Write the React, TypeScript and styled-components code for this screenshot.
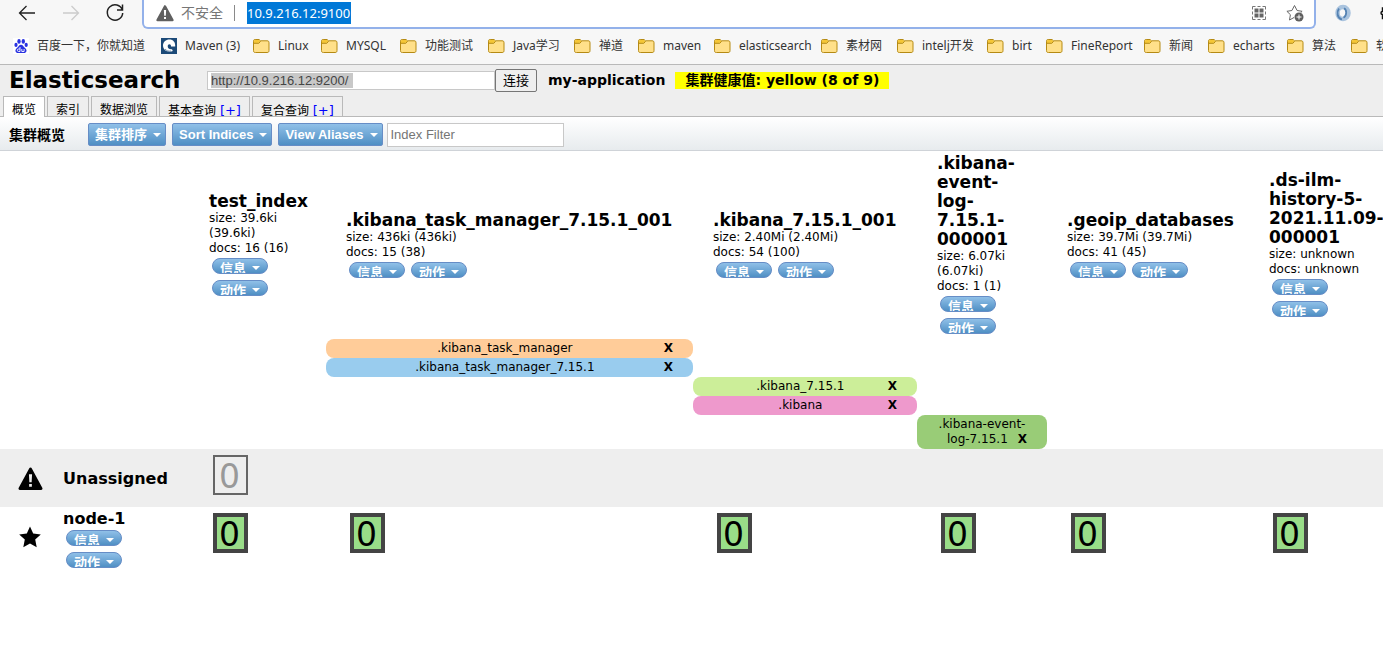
import React from "react";
import styled, { createGlobalStyle, css } from "styled-components";

const verdana = `Verdana, "DejaVu Sans", "Noto Sans CJK SC", sans-serif`;
const arial = `"Liberation Sans", Arial, "Noto Sans CJK SC", sans-serif`;
const chrome = `"Noto Sans", "Noto Sans CJK SC", sans-serif`;

const GlobalStyle = createGlobalStyle`
  *, *::before, *::after { box-sizing: border-box; }
  body { margin: 0; background: #fff; color: #000; font: 12px/15px ${verdana}; overflow-x: hidden; }
  h1, h2, h3 { margin: 0; }
  button, input { font: inherit; color: inherit; margin: 0; }
  a { color: inherit; text-decoration: none; }
`;

/* ---------- browser frame ---------- */

const BrowserBar = styled.div`
  background: #f7f7f7;
  font-family: ${chrome};
  border-bottom: 1px solid #b9b9b9;
`;

const AddressRow = styled.div`
  display: flex;
  height: 29px;
  overflow: hidden;
`;

const NavButtons = styled.div`
  display: flex;
  width: 142px;
  flex: none;
  gap: 20px;
  padding-left: 15px;
`;

const IconButton = styled.button`
  display: flex;
  align-items: center;
  justify-content: center;
  flex: none;
  width: 24px;
  height: 26px;
  padding: 0;
  border: 0;
  background: none;
`;

const AddressBox = styled.div`
  display: flex;
  align-items: center;
  flex: 1;
  height: 29px;
  padding: 0 7px 1px 12px;
  background: #fff;
  border: 2px solid #93b1ea;
  border-top: 0;
  border-radius: 0 0 6px 6px;
`;

const Insecure = styled.span`
  margin: 0 12px 0 7px;
  padding-right: 11px;
  border-right: 1px solid #8a8a8a;
  font-size: 14px;
  line-height: 16px;
  color: #767676;
`;

const AddressInput = styled.input`
  width: 104px;
  height: 22px;
  padding: 0;
  border: 0;
  outline: 0;
  background: #0078d7;
  color: #fff;
  font-size: 13px;
`;

const AddressTools = styled.div`
  display: flex;
  gap: 12px;
  margin-left: auto;
`;

const Extensions = styled.div`
  display: flex;
  gap: 20px;
  width: 67px;
  padding-left: 15px;
  flex: none;
  overflow: hidden;
`;

const Bookmarks = styled.nav`
  display: flex;
  height: 35px;
  padding: 0 0 1px 13px;
  overflow: hidden;
`;

const Bookmark = styled.a<{ $width: number }>`
  display: flex;
  align-items: center;
  flex: none;
  gap: 8px;
  width: ${(p) => p.$width}px;
  font-size: 12px;
  line-height: 16px;
  color: #333;
  white-space: nowrap;
  svg { flex: none; }
`;

/* ---------- application header ---------- */

const Header = styled.header`
  display: flex;
  flex-direction: column;
  height: 52px;
  background: #eee;
  border-bottom: 1px solid #b9b9b9;
`;

const HeaderRow = styled.div`
  display: flex;
  align-items: center;
  height: 30px;
  padding-left: 9px;
`;

const Title = styled.h1`
  width: 198px;
  font-size: 23px;
  line-height: 30px;
`;

const UrlBox = styled.label`
  display: flex;
  align-items: center;
  width: 288px;
  height: 19px;
  padding-left: 3px;
  background: #fff;
  border: 1px solid #c8c8c8;
`;

const UrlInput = styled.input`
  width: 142px;
  height: 15px;
  padding: 0;
  border: 0;
  outline: 0;
  background: #c8c8c8;
  color: #444;
  font: 13px/15px ${arial};
`;

const Connect = styled.button`
  width: 42px;
  height: 23px;
  padding: 0;
  border: 1px solid #767676;
  border-radius: 2px;
  background: #efefef;
  font: 13px/19px ${arial};
`;

const ClusterName = styled.span`
  margin-left: 11px;
  font-weight: bold;
  font-size: 14px;
`;

const Health = styled.span`
  margin-left: 10px;
  padding: 0 10px;
  background: #ff0;
  font-weight: bold;
  font-size: 14px;
  line-height: 17px;
  white-space: nowrap;
`;

const Tabs = styled.nav`
  display: flex;
  align-items: flex-end;
  gap: 2px;
  height: 21px;
  padding-left: 3px;
`;

const Tab = styled.a<{ $active?: boolean }>`
  height: 20px;
  padding: 5px 8px 0;
  border: 1px solid #b9b9b9;
  border-bottom: 0;
  background: ${(p) => (p.$active ? "#fff" : "#eee")};
  ${(p) => p.$active && css`margin-bottom: -1px; height: 21px;`}
  line-height: 17px;
  white-space: nowrap;
  span { color: #00f; font-size: 13px; }
`;

const Toolbar = styled.div`
  display: flex;
  align-items: center;
  height: 34px;
  padding: 2px 0 0 9px;
  background: linear-gradient(#fff, #e7ebee);
  border-bottom: 1px solid #cfd3d8;
`;

const ToolbarLabel = styled.h2`
  width: 79px;
  font-size: 14px;
  line-height: 20px;
`;

const blue = css`
  display: inline-flex;
  border: 1px solid #668dc6;
  background: linear-gradient(#90c0e8, #4f8fc4);
  color: #fff;
  font-family: ${arial};
  font-weight: bold;
  font-size: 13px;
  white-space: nowrap;
`;

const MenuButton = styled.button`
  ${blue}
  align-items: center;
  gap: 6px;
  height: 23px;
  padding: 0 4px 0 6px;
  margin-right: 6px;
  border-radius: 2px;
`;

const Caret = styled.i`
  flex: none;
  border: 4px solid transparent;
  border-top-color: #fff;
  border-bottom: 0;
`;

const Filter = styled.input`
  width: 177px;
  height: 24px;
  margin-left: -2px;
  padding: 0 3px;
  border: 1px solid #c8c8c8;
  background: #fff;
  font: 13px/20px ${arial};
  &::placeholder { color: #757575; }
`;

/* ---------- cluster table ---------- */

const Scroller = styled.main`
  overflow-x: hidden;
`;

const Cluster = styled.table`
  width: 100%;
  min-width: 1380px;
  table-layout: fixed;
  border-collapse: collapse;
  th, td { padding: 0; text-align: left; font-weight: normal; }
`;

const Col = styled.col<{ $width?: number }>`
  width: ${(p) => (p.$width ? `${p.$width}px` : "auto")};
`;

const IndexHead = styled.div<{ $narrow?: boolean }>`
  padding: 3px 0 0 20px;
  ${(p) => p.$narrow && css`padding-right: 18px;`}
`;

const Name = styled.h3<{ $index?: boolean }>`
  font-size: ${(p) => (p.$index ? 17 : 16)}px;
  line-height: 19px;
`;

const Pills = styled.div<{ $stack?: boolean }>`
  display: flex;
  flex-direction: ${(p) => (p.$stack ? "column" : "row")};
  gap: 6px;
  padding: 2px 3px 5px;
`;

const Pill = styled.button`
  ${blue}
  align-items: flex-start;
  gap: 6px;
  width: 56px;
  height: 16px;
  padding: 0 6px 0 7px;
  border-radius: 8px;
  line-height: 20px;
  overflow: hidden;
  ${Caret} { margin-top: 7px; }
`;

const Alias = styled.div<{ $color: string }>`
  padding: 2px 20px;
  border-radius: 8px;
  background: ${(p) => p.$color};
  text-align: center;
`;

const Remove = styled.button`
  float: right;
  padding: 0;
  border: 0;
  background: none;
  font-weight: bold;
  line-height: 15px;
`;

const NodeRow = styled.tr<{ $shaded?: boolean }>`
  height: ${(p) => (p.$shaded ? 58 : 68)}px;
  background: ${(p) => (p.$shaded ? "#eee" : "#fff")};
`;

const NodeIcon = styled.td<{ $raised?: boolean }>`
  && {
    padding-left: 18px;
    padding-bottom: ${(p) => (p.$raised ? 8 : 0)}px;
  }
  svg { display: block; }
`;

const ShardCell = styled.td`
  && { padding: 6px 0 0 24px; }
  vertical-align: top;
`;

const Shard = styled.button<{ $unassigned?: boolean }>`
  display: flex;
  align-items: center;
  justify-content: center;
  width: 35px;
  height: 40px;
  padding: 3px 2px 0 0;
  border: ${(p) => (p.$unassigned ? "2px solid #666" : "4px solid #444")};
  background: ${(p) => (p.$unassigned ? "#eee" : "#9d8")};
  color: ${(p) => (p.$unassigned ? "#999" : "#000")};
  font-size: 33px;
  line-height: 29px;
`;

/* ---------- drawings ---------- */

const Folder = () => (
  <svg width="18" height="16" viewBox="0 0 18 16">
    <path d="M1.500 3.200c0-1.300.5-1.700 1.700-1.700h3.800l1.500 1.300h6.500c1.500 0 2 .6 2 2v7.700c0 1.500-.6 2-2 2h-11.500c-1.500 0-2-.5-2-2z" fill="#ffe08a" stroke="#b58a13" />
    <path d="M2 5.200V3.300C2 2.300 2.400 2 3.200 2h3.600L8.300 3.200 6.800 4.800z" fill="#f5c636" />
    <path d="M2 5.300h4.800L8.600 3.200" fill="none" stroke="#b58a13" />
  </svg>
);

const Paw = () => (
  <svg width="16" height="16" viewBox="0 0 16 16">
    <rect width="16" height="16" fill="#fff" />
    <g fill="#2932e1">
      <ellipse cx="6" cy="3.400" rx="1.700" ry="2.300" />
      <ellipse cx="10.300" cy="3.400" rx="1.700" ry="2.300" />
      <ellipse cx="3" cy="6.900" rx="1.600" ry="2.100" />
      <ellipse cx="13.200" cy="6.900" rx="1.600" ry="2.100" />
      <path d="M8 6.800c2 0 2.500 2 4 3.200 2.700 2.200 1.500 5-1 5-1.500 0-4.500 0-6 0-2.500 0-3.700-2.800-1-5C5.500 8.800 6 6.800 8 6.800z" />
    </g>
    <path d="M7 9v4.500H5.600a1.200 1.200 0 010-2.500H7M8.800 11v2.500h2.300V11" fill="none" stroke="#fff" strokeWidth=".9" />
  </svg>
);

const Swirl = () => (
  <svg width="17" height="16" viewBox="0 0 17 16">
    <rect x="1" width="16" height="16" fill="#1c4a78" />
    <path d="M9.500 1.600c3.700 0 5.900 2.700 5.700 6.900H11c.1-1.400-.5-2.200-1.600-2.200-1 0-1.700.8-1.700 2 0 2 1.700 3.300 4.300 2.900l.8 1.800c-1 .5-2 .8-3.200.8-3.700 0-6.600-2.600-6.600-6.200 0-3.400 2.800-6 6.500-6z" fill="#fff" />
    <path d="M5 11c1.500 1.800 3.500 2.500 6 2" fill="none" stroke="#1c4a78" strokeWidth=".6" />
  </svg>
);

const Warning = ({ size, fill, mark }: { size: number; fill: string; mark: string }) => (
  <svg width={size} height={size} viewBox="0 0 24 24">
    <path d="M12 1.500c.6 0 1 .3 1.300.8l10 18.500c.6 1.100 0 2.200-1.200 2.200H1.900C.7 23 .1 21.900.7 20.800l10-18.500c.3-.5.7-.8 1.300-.8z" fill={fill} />
    <path d="M10.500 8h3l-.4 7.500h-2.200zM10.700 17.300h2.600V20h-2.600z" fill={mark} />
  </svg>
);

/* ---------- data ---------- */

const bookmarks: [string, number][] = [
  ["百度一下，你就知道", 147], ["Maven (3)", 92], ["Linux", 68], ["MYSQL", 79], ["功能测试", 88],
  ["Java学习", 86], ["禅道", 64], ["maven", 76], ["elasticsearch", 107], ["素材网", 76],
  ["intelj开发", 90], ["birt", 59], ["FineReport", 98], ["新闻", 64], ["echarts", 79],
  ["算法", 64], ["软件", 64],
];

type IndexInfo = { name: string; size: string; docs: string; width?: number; narrow?: boolean };

const indices: IndexInfo[] = [
  { name: "test_index", size: "39.6ki (39.6ki)", docs: "16 (16)", width: 137, narrow: true },
  { name: ".kibana_task_manager_7.15.1_001", size: "436ki (436ki)", docs: "15 (38)", width: 367 },
  { name: ".kibana_7.15.1_001", size: "2.40Mi (2.40Mi)", docs: "54 (100)", width: 224 },
  { name: ".kibana-event-log-7.15.1-000001", size: "6.07ki (6.07ki)", docs: "1 (1)", width: 130, narrow: true },
  { name: ".geoip_databases", size: "39.7Mi (39.7Mi)", docs: "41 (45)", width: 202 },
  { name: ".ds-ilm-history-5-2021.11.09-000001", size: "unknown", docs: "unknown" },
];

const aliases = [
  { name: ".kibana_task_manager", column: 1, color: "#fc9" },
  { name: ".kibana_task_manager_7.15.1", column: 1, color: "#9ce" },
  { name: ".kibana_7.15.1", column: 2, color: "#ce9" },
  { name: ".kibana", column: 2, color: "#e9c" },
  { name: ".kibana-event-log-7.15.1", column: 3, color: "#9c7" },
];

const Actions = ({ stack }: { stack?: boolean }) => (
  <Pills $stack={stack}>
    <Pill type="button">信息<Caret /></Pill>
    <Pill type="button">动作<Caret /></Pill>
  </Pills>
);

export default function App() {
  return (
    <>
      <GlobalStyle />
      <BrowserBar>
        <AddressRow>
          <NavButtons>
            <IconButton aria-label="Back">
              <svg width="24" height="24" viewBox="0 0 24 24" fill="none" stroke="#222" strokeWidth="1.300">
                <path d="M20 12H4.500M11.500 5L4.500 12l7 7" />
              </svg>
            </IconButton>
            <IconButton aria-label="Forward">
              <svg width="24" height="24" viewBox="0 0 24 24" fill="none" stroke="#ccc" strokeWidth="1.300">
                <path d="M4 12h15.500M12.500 5l7 7-7 7" />
              </svg>
            </IconButton>
            <IconButton aria-label="Reload">
              <svg width="24" height="24" viewBox="0 0 24 24" fill="none" stroke="#222" strokeWidth="1.500">
                <path d="M19.300 9A7.700 7.700 0 1 0 19.700 12M19.500 3.500V9H14" />
              </svg>
            </IconButton>
          </NavButtons>
          <AddressBox>
            <Warning size={18} fill="#5f5f5f" mark="#fff" />
            <Insecure>不安全</Insecure>
            <AddressInput aria-label="Address" defaultValue="10.9.216.12:9100" />
            <AddressTools>
              <IconButton aria-label="Apps">
                <svg width="16" height="16" viewBox="0 0 16 16" fill="none" stroke="#777">
                  <path d="M1.500 4.500v-3h3M11.500 1.500h3v3M14.500 11.500v3h-3M4.500 14.500h-3v-3M6.500 1.500h3M6.500 14.500h3M1.500 6.500v3M14.500 6.500v3" />
                  <path d="M3.500 3.500h4v4h-4zM8.500 3.500h4v4h-4zM3.500 8.500h4v4h-4zM8.500 8.500h4v4h-4z" fill="#666" stroke="none" />
                </svg>
              </IconButton>
              <IconButton aria-label="Add favorite">
                <svg width="18" height="18" viewBox="0 0 18 18" fill="none" stroke="#666">
                  <path d="M8 13.500l-4.500 2.500.9-5.300L.9 7.300l5-.8L8.500 1.500l2.600 5 5 .8-1.400 1.400" />
                  <circle cx="13" cy="13" r="4.500" fill="#5f5f5f" stroke="none" />
                  <path d="M13 10.500v5M10.500 13h5" stroke="#fff" />
                </svg>
              </IconButton>
            </AddressTools>
          </AddressBox>
          <Extensions>
            <IconButton aria-label="Extension">
              <svg width="18" height="18" viewBox="0 0 18 18" fill="none">
                <ellipse cx="9" cy="9" rx="5.500" ry="6" stroke="#a9c3de" strokeWidth="4.500" />
                <path d="M10 4.200c3 1.500 3 7.500-.5 9.500M8 15.500C3 14 2.500 8 5 4.500" stroke="#5683b3" strokeWidth="1.800" />
              </svg>
            </IconButton>
            <IconButton aria-label="Extensions">
              <svg width="18" height="18" viewBox="0 0 18 18" fill="none" stroke="#111" strokeWidth="1.500">
                <path d="M9 4H4.500v3.500a1.500 1.500 0 100 3V14.500H9" />
              </svg>
            </IconButton>
          </Extensions>
        </AddressRow>
        <Bookmarks aria-label="Bookmarks">
          {bookmarks.map(([label, width], i) => (
            <Bookmark href="#" key={label} $width={width}>
              {i === 0 ? <Paw /> : i === 1 ? <Swirl /> : <Folder />}
              {label}
            </Bookmark>
          ))}
        </Bookmarks>
      </BrowserBar>

      <Header>
        <HeaderRow>
          <Title>Elasticsearch</Title>
          <UrlBox>
            <UrlInput aria-label="Cluster URL" defaultValue="http://10.9.216.12:9200/" />
          </UrlBox>
          <Connect type="button">连接</Connect>
          <ClusterName>my-application</ClusterName>
          <Health>集群健康值: yellow (8 of 9)</Health>
        </HeaderRow>
        <Tabs>
          <Tab href="#" $active>概览</Tab>
          <Tab href="#">索引</Tab>
          <Tab href="#">数据浏览</Tab>
          <Tab href="#">基本查询 <span>[+]</span></Tab>
          <Tab href="#">复合查询 <span>[+]</span></Tab>
        </Tabs>
      </Header>

      <Toolbar>
        <ToolbarLabel>集群概览</ToolbarLabel>
        <MenuButton type="button">集群排序<Caret /></MenuButton>
        <MenuButton type="button">Sort Indices<Caret /></MenuButton>
        <MenuButton type="button">View Aliases<Caret /></MenuButton>
        <Filter aria-label="Index Filter" placeholder="Index Filter" />
      </Toolbar>

      <Scroller>
        <Cluster>
          <colgroup>
            <Col $width={63} />
            <Col $width={126} />
            {indices.map((x) => <Col key={x.name} $width={x.width} />)}
          </colgroup>
          <thead>
            <tr>
              <td colSpan={2} />
              {indices.map((x) => (
                <th key={x.name} scope="col">
                  <IndexHead $narrow={x.narrow}>
                    <Name $index>{x.name}</Name>
                    <div>size: {x.size}</div>
                    <div>docs: {x.docs}</div>
                    <Actions stack={x.narrow || !x.width} />
                  </IndexHead>
                </th>
              ))}
            </tr>
          </thead>
          <tbody>
            {aliases.map((a) => (
              <tr key={a.name}>
                <td colSpan={2 + a.column} />
                <td>
                  <Alias $color={a.color}>
                    {a.name} <Remove type="button" aria-label={`Remove ${a.name}`}>X</Remove>
                  </Alias>
                </td>
                <td colSpan={indices.length - a.column - 1} />
              </tr>
            ))}
            <NodeRow $shaded>
              <NodeIcon><Warning size={25} fill="#000" mark="#eee" /></NodeIcon>
              <th scope="row"><Name>Unassigned</Name></th>
              <ShardCell><Shard type="button" $unassigned>0</Shard></ShardCell>
              <td colSpan={5} />
            </NodeRow>
            <NodeRow>
              <NodeIcon $raised>
                <svg width="24" height="24" viewBox="0 0 24 24">
                  <path d="M12 1.500l3.200 7 7.600.9-5.600 5.200 1.500 7.600L12 18.400l-6.700 3.800 1.500-7.600L1.200 9.400l7.600-.9z" />
                </svg>
              </NodeIcon>
              <th scope="row">
                <Name>node-1</Name>
                <Actions stack />
              </th>
              {indices.map((x) => (
                <ShardCell key={x.name}><Shard type="button">0</Shard></ShardCell>
              ))}
            </NodeRow>
          </tbody>
        </Cluster>
      </Scroller>
    </>
  );
}
